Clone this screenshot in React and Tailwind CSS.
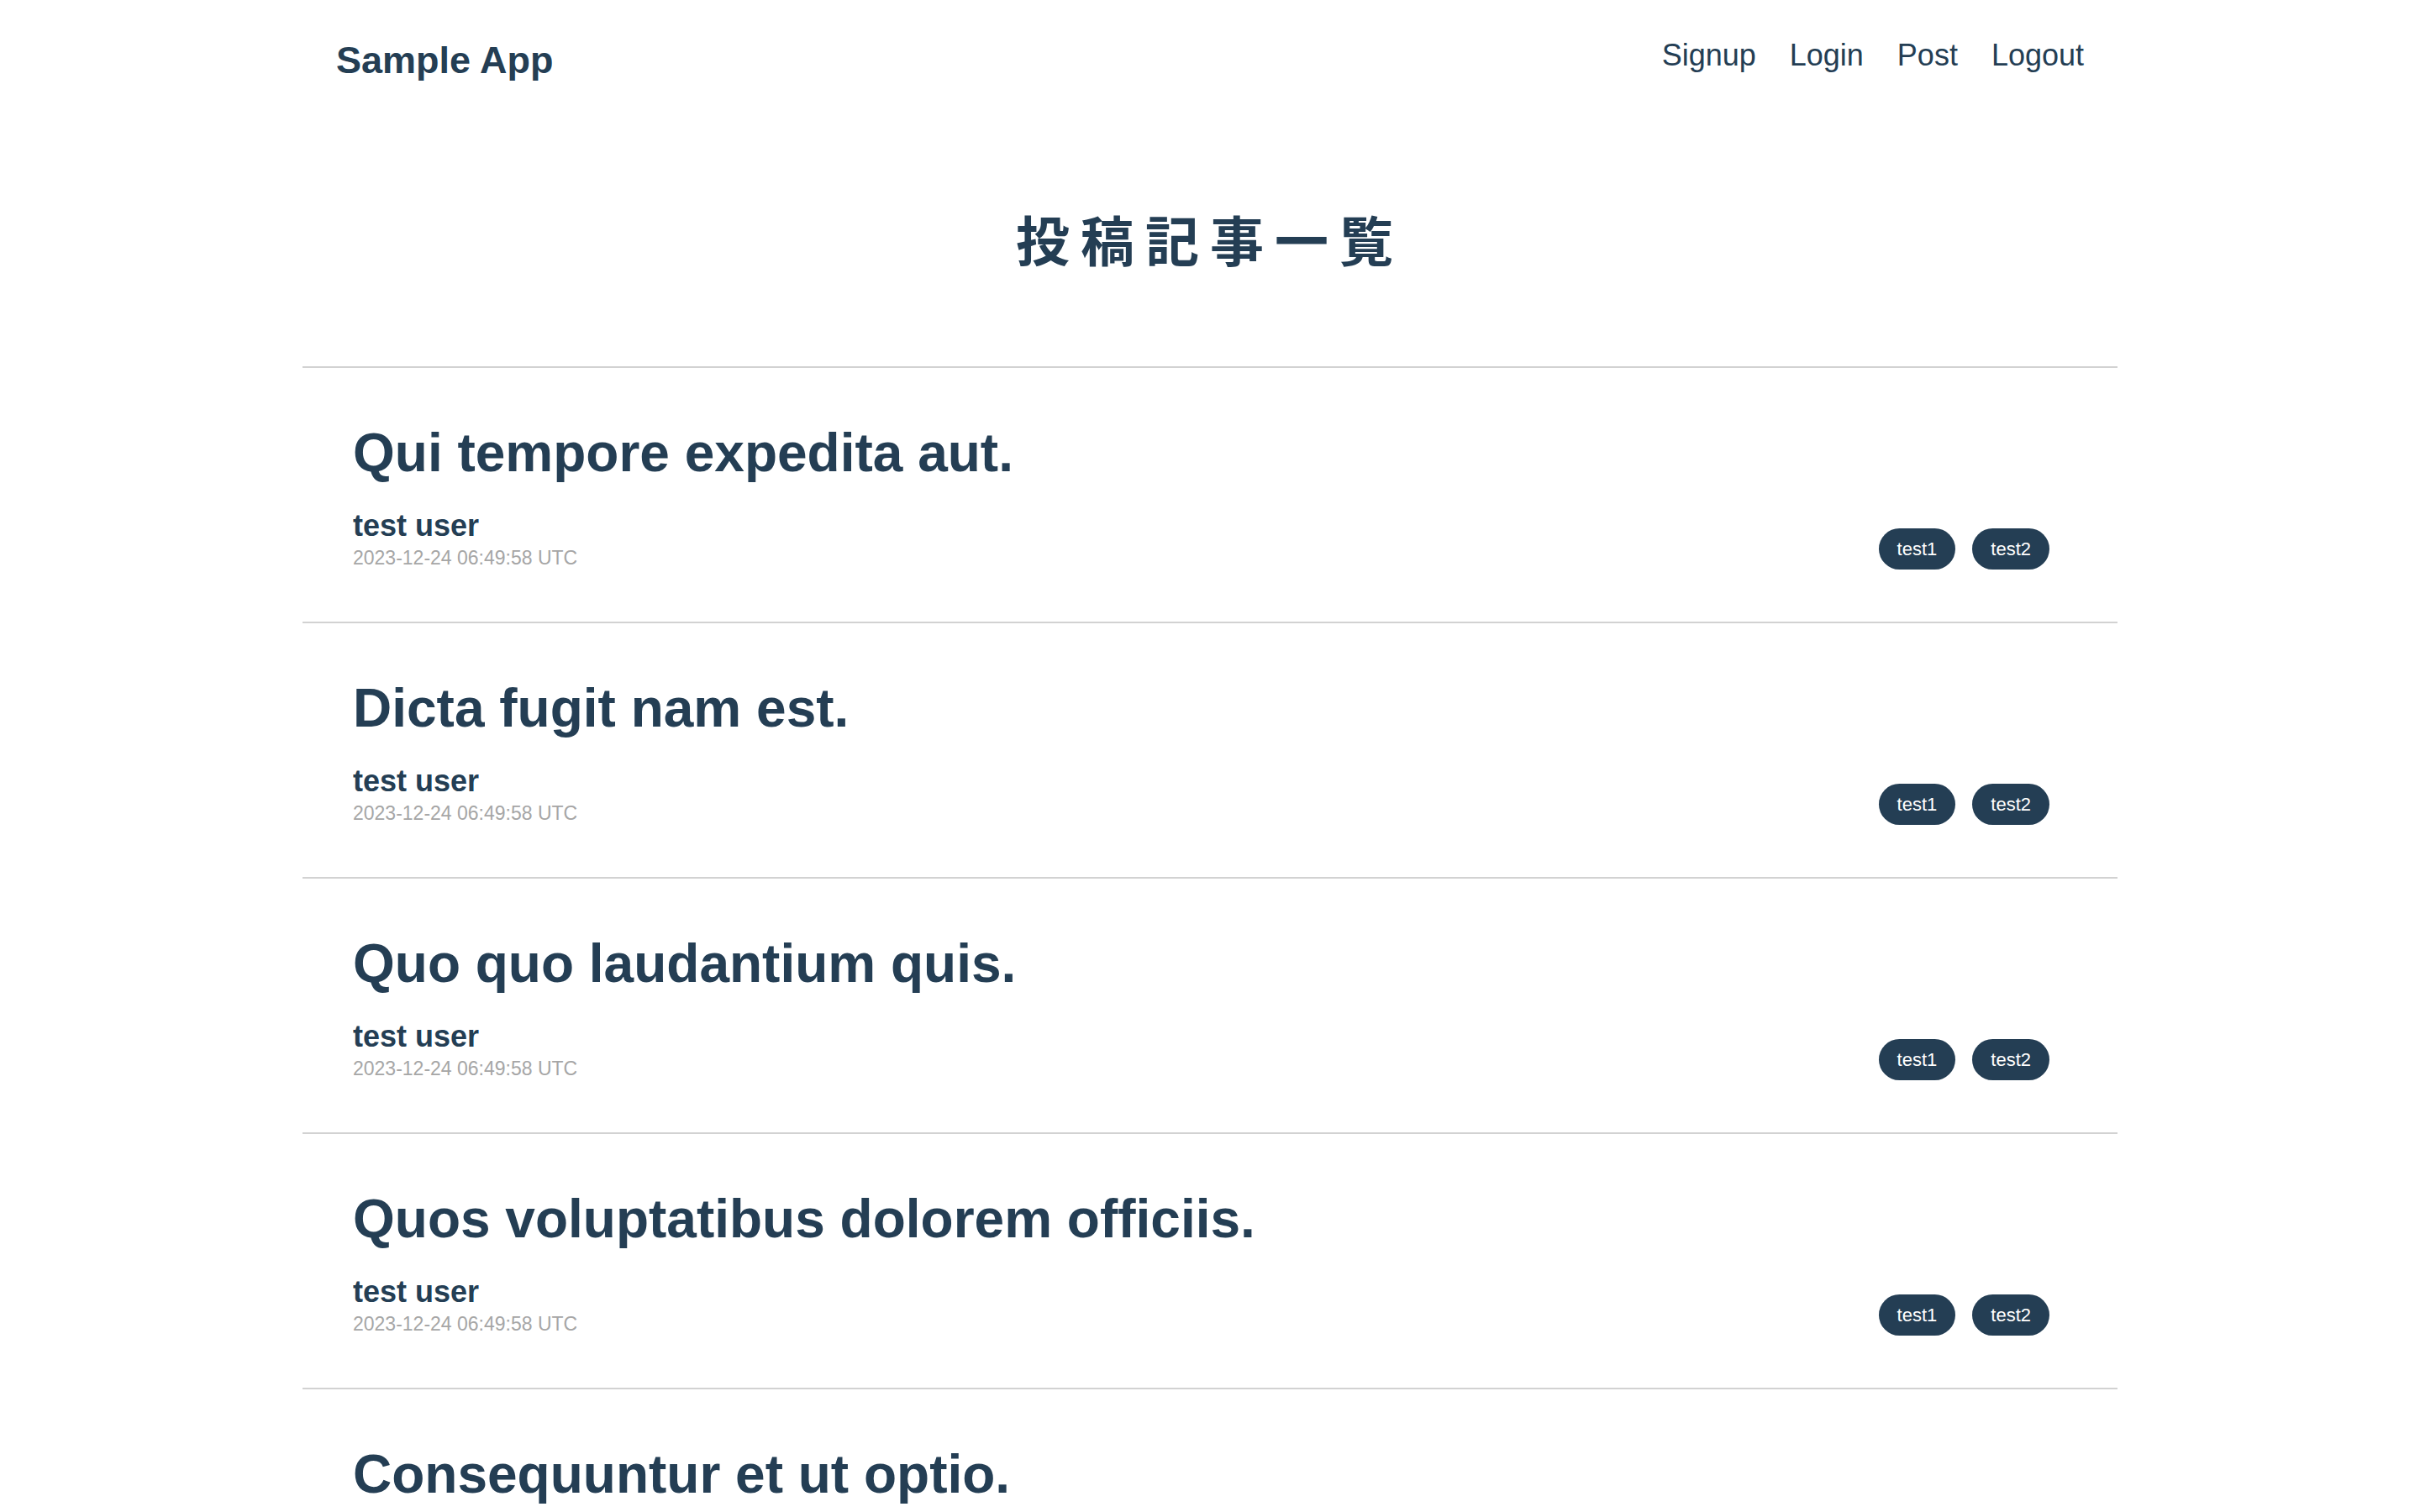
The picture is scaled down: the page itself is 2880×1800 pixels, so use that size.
import React from "react";

const posts = [
  "Qui tempore expedita aut.",
  "Dicta fugit nam est.",
  "Quo quo laudantium quis.",
  "Quos voluptatibus dolorem officiis.",
  "Consequuntur et ut optio.",
  "Aut voluptas sit minima.",
];

function Tag({ children }) {
  return (
    <span className="inline-flex h-[49px] items-center rounded-full bg-[#243e54] px-[22px] text-[22px] leading-none text-white">
      {children}
    </span>
  );
}

export default function App() {
  return (
    <div
      className="min-h-screen bg-white text-[#243e54]"
      style={{ fontFamily: '"Liberation Sans", "Noto Sans CJK JP", Arial, sans-serif' }}
    >
      <div className="mx-auto w-[2160px]">
        <header className="flex items-start justify-between px-[40px] pt-[48px]">
          <a className="mt-[1px] text-[45px] font-bold leading-[45px]">Sample App</a>
          <nav className="flex gap-[40px] text-[36px] leading-[36px]">
            <a>Signup</a>
            <a>Login</a>
            <a>Post</a>
            <a>Logout</a>
          </nav>
        </header>

        <h1
          className="mt-[157px] text-center text-[64px] font-bold leading-[64px] tracking-[13px]"
          style={{ fontFamily: '"Noto Sans CJK JP", sans-serif' }}
        >
          投稿記事一覧
        </h1>

        <ul className="mt-[121px]">
          {posts.map((title, i) => (
            <li
              key={i}
              className="border-t-2 border-[#d2d2d2] pb-[59px] pl-[60px] pr-[81px] pt-[65px]"
            >
              <h2 className="text-[64px] font-bold leading-[72px]">{title}</h2>
              <div className="mt-[28px] flex items-end justify-between">
                <div>
                  <p className="text-[36px] font-bold leading-[45px]">test user</p>
                  <p className="text-[23px] leading-[33px] text-[#a6a6a6]">
                    2023-12-24 06:49:58 UTC
                  </p>
                </div>
                <div className="mb-[3px] flex gap-[20px]">
                  <Tag>test1</Tag>
                  <Tag>test2</Tag>
                </div>
              </div>
            </li>
          ))}
        </ul>
      </div>
    </div>
  );
}
